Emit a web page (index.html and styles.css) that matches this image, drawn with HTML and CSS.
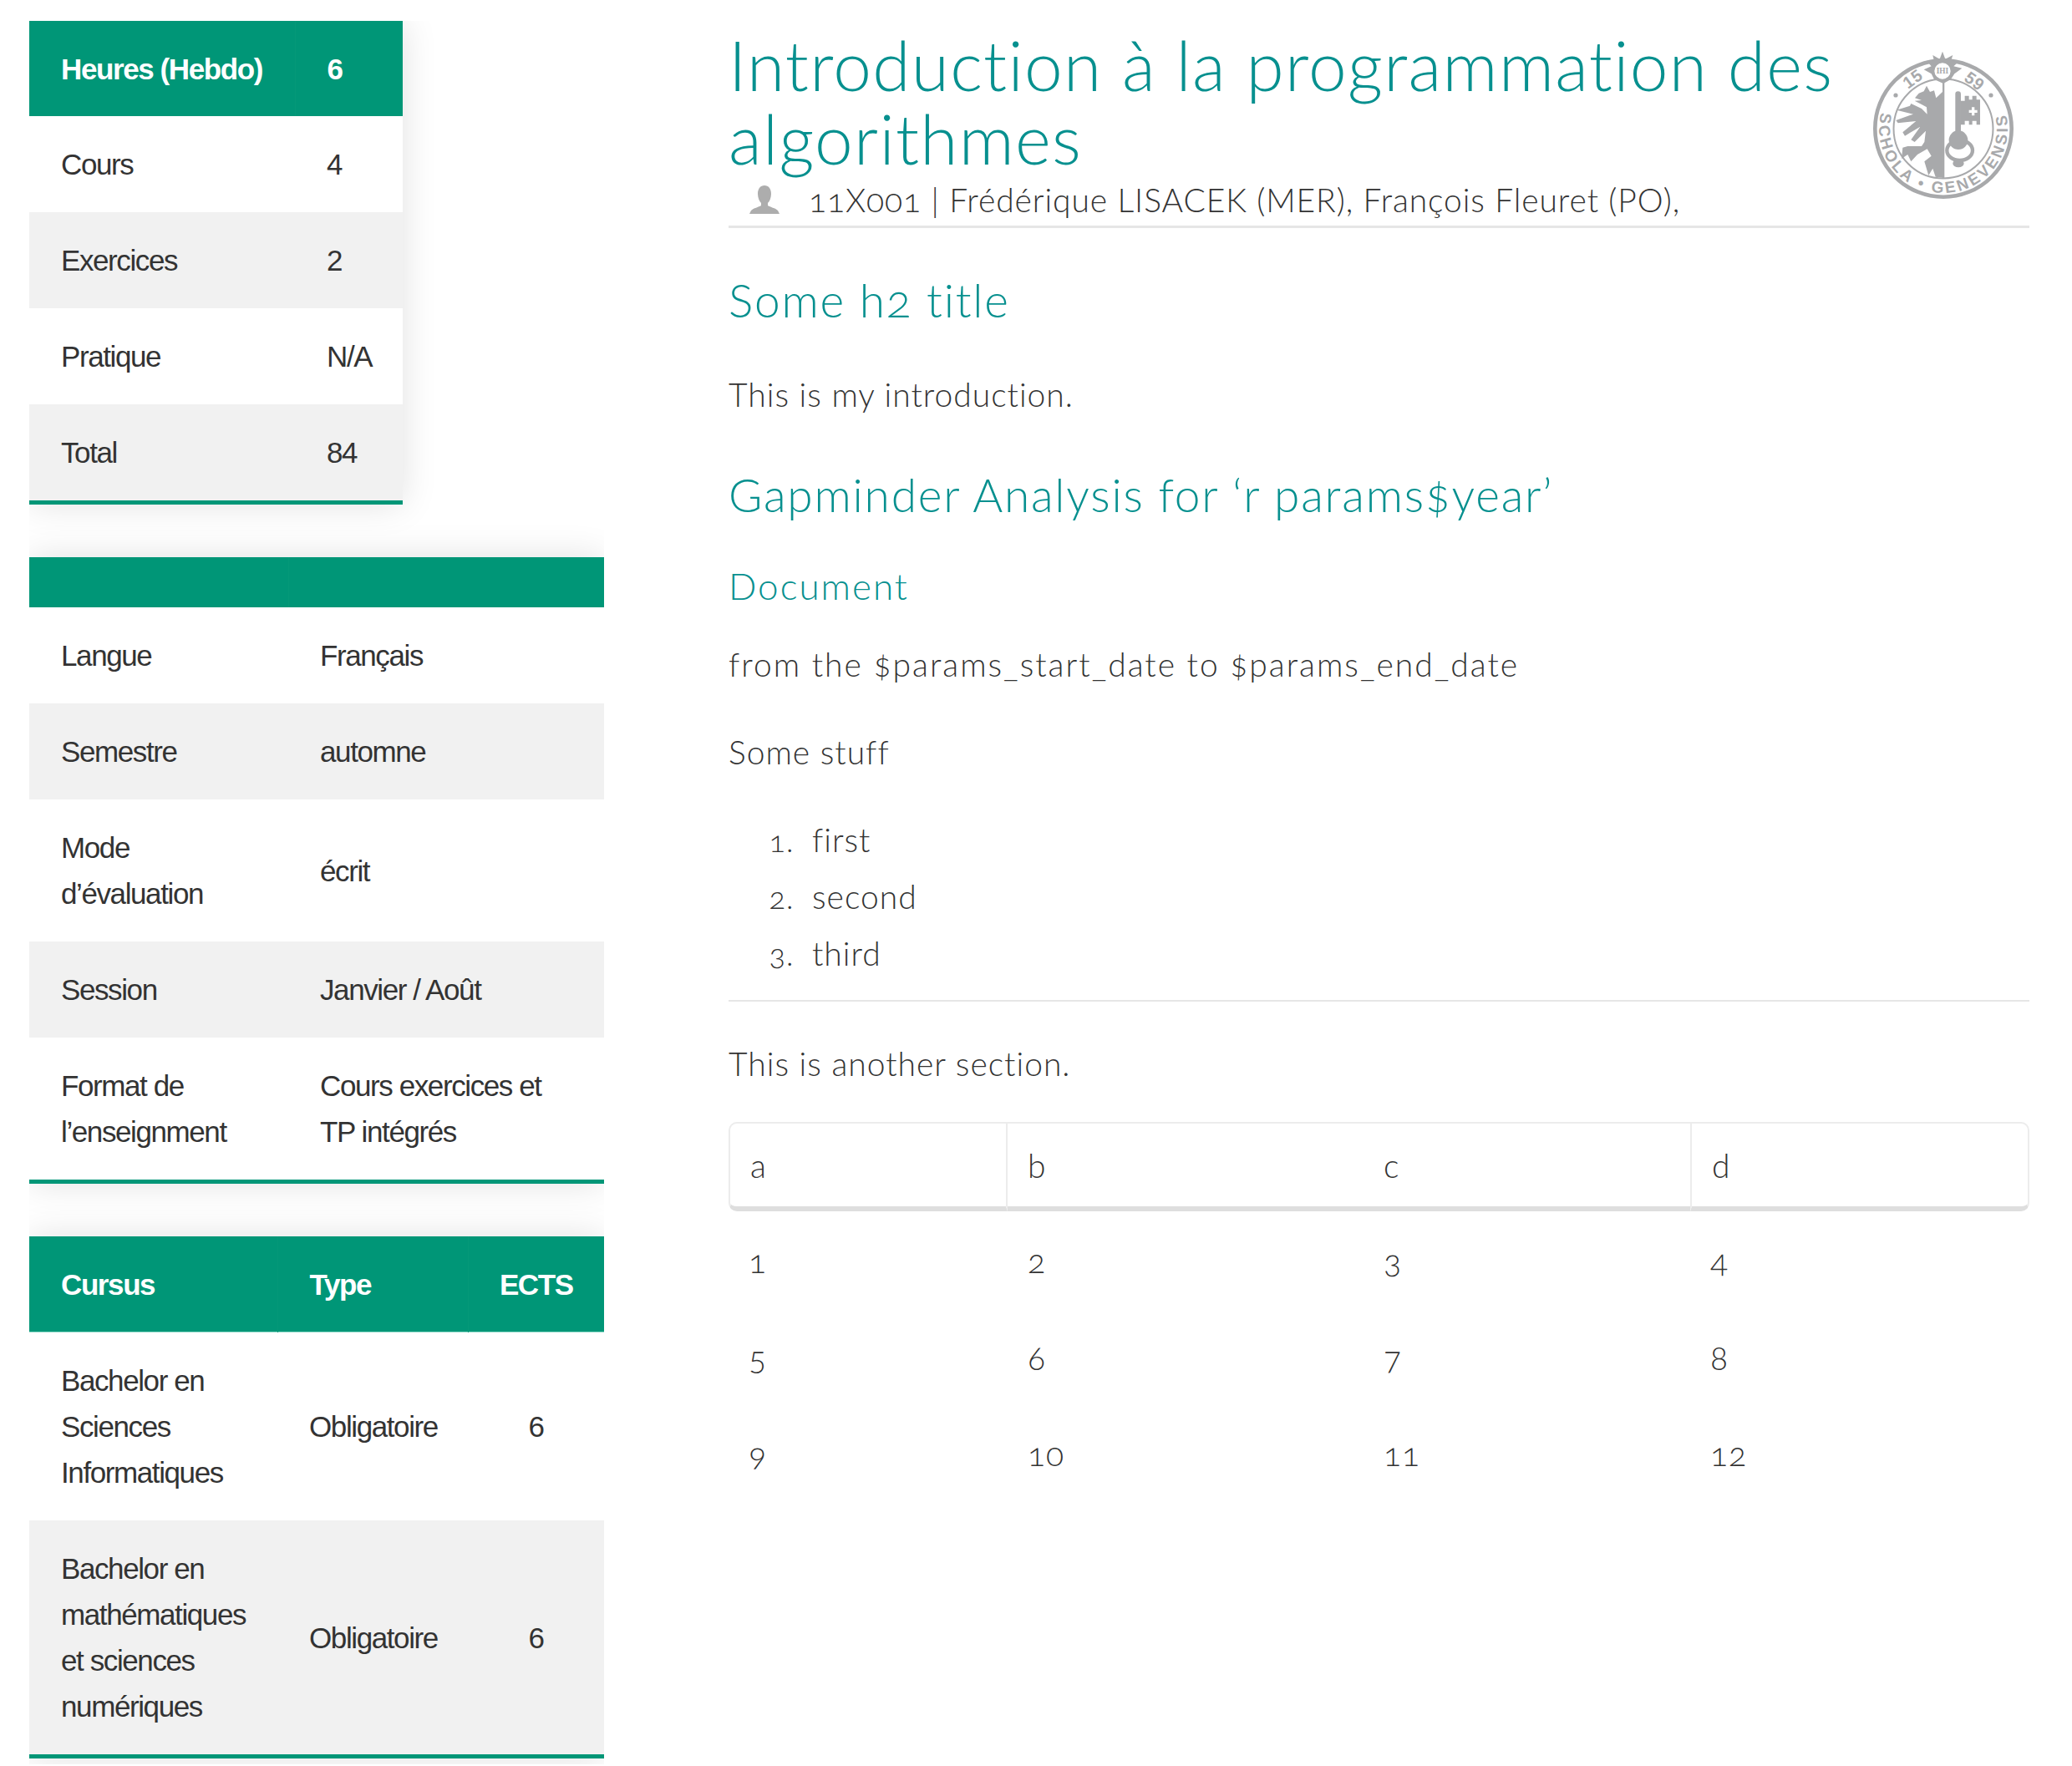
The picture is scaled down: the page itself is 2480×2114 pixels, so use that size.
FILE: index.html
```html
<!DOCTYPE html>
<html lang="fr">

<head>
    <meta charset="UTF-8">
    <meta name="viewport" content="width=device-width, initial-scale=1.0">
    <title>Introduction à la programmation des algorithmes</title>
    <link rel="stylesheet" href="styles.css">
</head>

<body>
    <div class="page">
        <aside class="sidebar">
            <table class="info-table hours-table">
                <thead>
                    <tr><th class="col-hours">Heures (Hebdo)</th><th>6</th></tr>
                </thead>
                <tbody>
                    <tr><td>Cours</td><td>4</td></tr>
                    <tr><td>Exercices</td><td>2</td></tr>
                    <tr><td>Pratique</td><td>N/A</td></tr>
                    <tr><td>Total</td><td>84</td></tr>
                </tbody>
            </table>

            <table class="info-table details-table">
                <thead>
                    <tr><th class="empty-head col-label"></th><th class="empty-head"></th></tr>
                </thead>
                <tbody>
                    <tr><td>Langue</td><td>Français</td></tr>
                    <tr><td>Semestre</td><td>automne</td></tr>
                    <tr><td>Mode d’évaluation</td><td>écrit</td></tr>
                    <tr><td>Session</td><td>Janvier / Août</td></tr>
                    <tr><td>Format de l’enseignment</td><td>Cours exercices et TP intégrés</td></tr>
                </tbody>
            </table>

            <table class="info-table cursus-table">
                <thead>
                    <tr><th class="col-cursus">Cursus</th><th class="col-type">Type</th><th class="col-ects">ECTS</th></tr>
                </thead>
                <tbody>
                    <tr><td>Bachelor en Sciences Informatiques</td><td class="col-type">Obligatoire</td><td class="col-ects">6</td></tr>
                    <tr><td>Bachelor en mathématiques et sciences numériques</td><td class="col-type">Obligatoire</td><td class="col-ects">6</td></tr>
                </tbody>
            </table>
        </aside>

        <main class="content">
            <header class="course-header">
                <div class="course-title">
                    <h1>Introduction à la programmation des algorithmes</h1>
                    <p class="course-meta">
                        <svg class="person-icon" viewBox="0 0 36 34" aria-hidden="true">
                            <path d="M18 0c5 0 8 4 8 10 0 5-2 9-4 11v3c3 2 9 3 12 6l2 4H0l2-4c3-3 9-4 12-6v-3c-2-2-4-6-4-11C10 4 13 0 18 0z" />
                        </svg>
                        11X001 | Frédérique LISACEK (MER), François Fleuret (PO),
                    </p>
                </div>
                <svg class="seal" viewBox="0 0 168 176" aria-label="Schola Genevensis">
                    <defs>
                        <path id="seal-legend" d="M12.6 63.2A77 77 0 1 0 155.4 63.2" />
                    </defs>
                    <circle class="seal-ring" cx="84" cy="92" r="81.7" />
                    <circle class="seal-ring-thin" cx="84" cy="92" r="59.5" />
                    <text class="seal-text"><textPath href="#seal-legend" startOffset="50%" text-anchor="middle">SCHOLA • GENEVENSIS</textPath></text>
                    <text class="seal-text seal-year" x="48" y="39" text-anchor="middle" transform="rotate(-36 48 33)">15</text>
                    <text class="seal-text seal-year" x="121" y="42" text-anchor="middle" transform="rotate(36 121 36)">59</text>
                    <circle class="seal-fill" cx="27" cy="52" r="2.6" />
                    <circle class="seal-fill" cx="141" cy="52" r="2.6" />
                    <!-- dessin en coordonnées agrandies x3 -->
                    <g transform="translate(-42 -32) scale(0.3333)">
                        <path class="seal-fill" d="M375 95L385 122L412 108L405 130L437 128L415 148L445 155L418 175L405 195L378 210L345 195L335 175L308 160L335 148L318 128L345 130L340 108L365 122Z" />
                        <circle class="seal-medal" cx="375" cy="165" r="31" />
                        <text class="seal-ihi" x="375" y="175" text-anchor="middle">IHI</text>
                        <rect class="seal-fill" x="375" y="200" width="7" height="350" />
                        <path class="seal-fill" d="M375 240L352 262L345 235L330 240L318 218L308 238L290 245L276 262L300 270L275 272L300 285L318 295L320 320L300 300L262 282L258 290L210 305L270 320L208 342L215 352L280 345L232 385L240 398L295 365L262 412L275 420L315 380L310 420L300 435L250 435L232 440L228 480L250 465L262 490L285 465L320 445L335 470L310 490L325 540L340 515L350 545L375 548Z" />
                        <rect class="seal-fill" x="421" y="238" width="20" height="160" rx="10" />
                        <path class="seal-fill seal-bit" d="M441 272H455V254H470V268H482V254H497V268H510V358H497V344H482V358H470V344H455V358H441ZM480 295V305H470V315H480V325H490V315H500V305H490V295Z" />
                        <ellipse class="seal-bow" cx="437" cy="450" rx="46" ry="36" />
                        <circle class="seal-fill" cx="432" cy="413" r="34" />
                        <ellipse class="seal-fill" cx="432" cy="497" rx="20" ry="14" />
                    </g>
                </svg>
            </header>

            <h2>Some h2 title</h2>
            <p>This is my introduction.</p>
            <h2>Gapminder Analysis for ‘r params$year’</h2>
            <h3>Document</h3>
            <p class="date-line">from the $params_start_date to $params_end_date</p>
            <p>Some stuff</p>
            <ol>
                <li>first</li>
                <li>second</li>
                <li>third</li>
            </ol>
            <hr>
            <p>This is another section.</p>

            <table class="data-table">
                <thead>
                    <tr><th class="col-a">a</th><th class="col-b">b</th><th class="col-c">c</th><th class="col-d">d</th></tr>
                </thead>
                <tbody>
                    <tr><td>1</td><td>2</td><td>3</td><td>4</td></tr>
                    <tr><td>5</td><td>6</td><td>7</td><td>8</td></tr>
                    <tr><td>9</td><td>10</td><td>11</td><td>12</td></tr>
                </tbody>
            </table>
        </main>
    </div>
</body>

</html>
```

FILE: styles.css
```css
:root {
    --green: #009677;
    --teal: #07908f;
    --text: #333333;
    --row: #f1f1f1;
    --rule: #e6e6e6;
    --seal: #a8a9ab;
}

* {
    box-sizing: border-box;
    margin: 0;
    padding: 0;
}

body {
    background: #ffffff;
    color: var(--text);
    font-family: "Lato", "Liberation Sans", sans-serif;
    font-weight: 300;
}

.page {
    display: flex;
    align-items: flex-start;
    padding: 25px 51px 0 35px;
}

/* colonne de gauche */
.sidebar {
    width: 688px;
    flex: none;
    display: flex;
    flex-direction: column;
    align-items: flex-start;
    gap: 63px;
    padding-bottom: 7px;
    overflow: hidden;
}

.info-table {
    border-collapse: collapse;
    table-layout: fixed;
    font-family: "Liberation Sans", Arial, sans-serif;
    font-size: 35px;
    line-height: 55px;
    letter-spacing: -1.4px;
    border-bottom: 5px solid var(--green);
    box-shadow: 0 0 40px rgba(0, 0, 0, 0.12);
}

.info-table th {
    background: var(--green);
    color: #ffffff;
    font-weight: 700;
    text-align: left;
    padding: 29.5px 38px;
}

.info-table th + th {
    border-left: 1px solid #059878;
}

.info-table td {
    padding: 30px 38px;
}

.info-table tbody tr {
    background: #ffffff;
}

.info-table tbody tr:nth-child(even) {
    background: var(--row);
}

.hours-table {
    width: 447px;
}

.col-hours {
    width: 318px;
}

.hours-table th:last-child,
.hours-table td:last-child {
    padding-right: 0;
}

.details-table {
    width: 688px;
}

.details-table th.empty-head {
    height: 60px;
    padding: 0;
}

.col-label {
    width: 310px;
}

.cursus-table {
    width: 688px;
}

.cursus-table th {
    padding-bottom: 30.5px;
    box-shadow: inset 0 -1px 0 #8fd8c6;
}

.col-cursus {
    width: 297px;
}

.info-table .col-type {
    width: 228px;
    padding-right: 0;
}

.info-table .col-ects {
    padding-left: 0;
    padding-right: 0;
    text-align: center;
}

/* colonne principale */
.content {
    flex: 1;
    margin-left: 149px;
    font-size: 39px;
    letter-spacing: 1px;
    font-feature-settings: "onum";
}

.course-header {
    display: flex;
    justify-content: space-between;
    align-items: flex-start;
    padding-bottom: 6px;
    border-bottom: 3px solid var(--rule);
}

.course-title {
    width: 1340px;
    padding-top: 8px;
}

h1 {
    color: var(--teal);
    font-size: 82px;
    font-weight: 300;
    line-height: 88px;
    letter-spacing: 1.3px;
}

.course-meta {
    display: flex;
    align-items: center;
    font-size: 39px;
    line-height: 50px;
    letter-spacing: 0.9px;
    margin: 0;
}

.person-icon {
    width: 36px;
    height: 34px;
    margin: 0 35px 0 25px;
    fill: #adadad;
    flex: none;
}

.seal {
    width: 168px;
    height: 176px;
    margin: 37px 19px 0 0;
    flex: none;
    letter-spacing: 0;
    font-feature-settings: normal;
}

.seal-fill {
    fill: var(--seal);
}

.seal-ring {
    fill: none;
    stroke: var(--seal);
    stroke-width: 4.6;
}

.seal-ring-thin {
    fill: none;
    stroke: var(--seal);
    stroke-width: 2;
}

.seal-medal {
    fill: #ffffff;
    stroke: var(--seal);
    stroke-width: 4;
}

.seal-ihi {
    fill: var(--seal);
    font-family: "Liberation Serif", serif;
    font-size: 28px;
    font-weight: 700;
}

.seal-text {
    fill: var(--seal);
    font-family: "Liberation Sans", sans-serif;
    font-size: 19px;
    font-weight: 700;
    letter-spacing: 3.2px;
}

.seal-year {
    font-size: 20px;
    letter-spacing: 1px;
}

.seal-bit {
    fill-rule: evenodd;
}

.seal-bow {
    fill: none;
    stroke: var(--seal);
    stroke-width: 13;
}

h2 {
    color: var(--teal);
    font-size: 55px;
    font-weight: 300;
    line-height: 66px;
    letter-spacing: 1.8px;
    margin: 57px 0 50px;
}

.course-header + h2 {
    margin-top: 53px;
}

h3 {
    color: var(--teal);
    font-size: 44px;
    font-weight: 300;
    line-height: 53px;
    letter-spacing: 2px;
    margin-bottom: 37px;
}

.content p {
    line-height: 60px;
    margin-bottom: 45px;
}

.content .date-line {
    letter-spacing: 2px;
}

.content .course-meta {
    line-height: 50px;
    margin: 5px 0 0;
}

ol {
    list-style: decimal;
    padding-left: 100px;
    margin-top: -4px;
    margin-bottom: 22px;
}

li {
    line-height: 68px;
}

li::marker {
    content: counter(list-item) ".\00a0\00a0";
    font-size: 36px;
}

hr {
    border: none;
    border-top: 2px solid var(--rule);
    margin-bottom: 44px;
}

.data-table {
    width: 100%;
    border-collapse: separate;
    border-spacing: 0;
    table-layout: fixed;
    margin-top: -5px;
}

.data-table th {
    font-weight: 300;
    text-align: left;
    padding: 24px;
    height: 107px;
    border-top: 2px solid #ececec;
    border-bottom: 6px solid #dedede;
}

.data-table .col-a {
    width: 334px;
    border-left: 2px solid #ececec;
    border-right: 2px solid #ececec;
    border-top-left-radius: 10px;
    border-bottom-left-radius: 10px;
}

.data-table .col-b {
    width: 426px;
}

.data-table .col-c {
    width: 391px;
}

.data-table .col-d {
    border-left: 2px solid #ececec;
    border-right: 2px solid #ececec;
    border-top-right-radius: 10px;
    border-bottom-right-radius: 10px;
}

.data-table td {
    padding: 0 24px;
    height: 115px;
}

.data-table tbody tr:first-child td {
    height: 117px;
}
```
